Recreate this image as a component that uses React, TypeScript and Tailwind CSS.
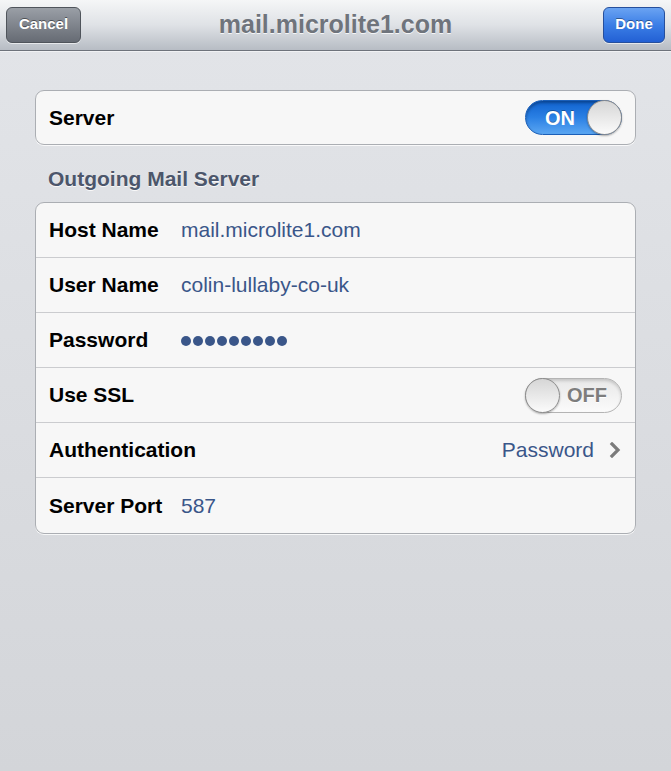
import React from 'react';

const font = { fontFamily: '"Liberation Sans", Arial, sans-serif' };

const Toggle = ({ on }: { on: boolean }) => {
    if (on) {
        return (
            <div className="relative w-[97px] h-[35px] rounded-full border border-[#1b5fb8] bg-gradient-to-b from-[#0f62cf] via-[#2a80e4] to-[#5aa6f2] flex items-center shadow-[inset_0_2px_3px_rgba(0,0,0,0.3)]">
                <span className="pl-[19px] text-white font-bold text-[20px] [text-shadow:0_-1px_0_rgba(0,0,0,0.3)]">ON</span>
                <div className="absolute right-[-1px] top-[-1px] w-[35px] h-[35px] rounded-full border border-[#8c8c8c] bg-gradient-to-b from-[#d6d6d6] to-[#fbfbfb] shadow-[0_1px_2px_rgba(0,0,0,0.3)]" />
            </div>
        );
    }
    return (
        <div className="relative w-[97px] h-[35px] rounded-full border border-[#b4b4b4] bg-gradient-to-b from-[#e8e8e8] to-[#fbfbfb] flex items-center justify-end shadow-[inset_0_2px_3px_rgba(0,0,0,0.15)]">
            <span className="pr-[14px] text-[#7d7d7d] font-bold text-[20px] [text-shadow:0_1px_0_#fff]">OFF</span>
            <div className="absolute left-[-1px] top-[-1px] w-[35px] h-[35px] rounded-full border border-[#8c8c8c] bg-gradient-to-b from-[#d6d6d6] to-[#fbfbfb] shadow-[0_1px_2px_rgba(0,0,0,0.3)]" />
        </div>
    );
};

const Row = ({ children, last }: { children: React.ReactNode; last?: boolean }) => (
    <div className={`h-[55px] flex items-center pl-[13px] pr-[13px] ${last ? '' : 'border-b border-[#cbcccf]'}`}>
        {children}
    </div>
);

const Label = ({ text, w }: { text: string; w?: string }) => (
    <span className={`text-[21px] font-bold text-black ${w ?? ''}`}>{text}</span>
);

const Value = ({ text }: { text: string }) => (
    <span className="text-[21px] text-[#3a5689]">{text}</span>
);

export default function App() {
    return (
        <div style={font} className="w-[671px] h-[771px] flex flex-col bg-gradient-to-b from-[#e3e5e9] to-[#d3d5d9] overflow-hidden">
            {/* nav bar */}
            <div className="h-[51px] shrink-0 grid grid-cols-[1fr_auto_1fr] items-center px-[6px] pb-[5px] pt-[4px] bg-gradient-to-b from-[#f5f6f7] via-[#dfe2e6] to-[#b7bcc4] border-b border-[#6e737b] shadow-[0_1px_0_rgba(255,255,255,0.5)]">
                <div className="flex">
                    <button className="w-[75px] h-[36px] rounded-[6px] border border-[#4f545b] bg-gradient-to-b from-[#9a9fa6] to-[#666b74] text-white font-bold text-[15px] [text-shadow:0_-1px_0_rgba(0,0,0,0.45)] shadow-[0_1px_0_rgba(255,255,255,0.6)]">
                        Cancel
                    </button>
                </div>
                <div className="text-[25px] font-bold text-[#6f747c] [text-shadow:0_1px_0_rgba(255,255,255,0.8)]">
                    mail.microlite1.com
                </div>
                <div className="flex justify-end">
                    <button className="w-[62px] h-[36px] rounded-[6px] border border-[#264f9c] bg-gradient-to-b from-[#6aa3f2] via-[#3b7ee6] to-[#2360d4] text-white font-bold text-[15px] [text-shadow:0_-1px_0_rgba(0,0,0,0.4)] shadow-[0_1px_0_rgba(255,255,255,0.6)]">
                        Done
                    </button>
                </div>
            </div>

            <div className="px-[35px] pt-[39px]">
                <div className="rounded-[9px] border border-[#abaeb3] bg-[#f7f7f7] shadow-[0_1px_0_rgba(255,255,255,0.8)]">
                    <div className="h-[53px] flex items-center justify-between pl-[13px] pr-[13px]">
                        <Label text="Server" />
                        <Toggle on />
                    </div>
                </div>

                <div className="pl-[13px] pt-[18px] pb-[7px] text-[21px] leading-[32px] font-bold text-[#4c566b] [text-shadow:0_1px_0_rgba(255,255,255,0.8)]">
                    Outgoing Mail Server
                </div>

                <div className="rounded-[9px] border border-[#abaeb3] bg-[#f7f7f7] shadow-[0_1px_0_rgba(255,255,255,0.8)] overflow-hidden">
                    <Row>
                        <Label text="Host Name" w="w-[132px]" />
                        <Value text="mail.microlite1.com" />
                    </Row>
                    <Row>
                        <Label text="User Name" w="w-[132px]" />
                        <Value text="colin-lullaby-co-uk" />
                    </Row>
                    <Row>
                        <Label text="Password" w="w-[132px]" />
                        <div className="flex gap-[2px] pt-[2px]">
                            {Array.from({ length: 9 }).map((_, i) => (
                                <div key={i} className="w-[10px] h-[10px] rounded-full bg-[#3a5689]" />
                            ))}
                        </div>
                    </Row>
                    <Row>
                        <div className="flex-1">
                            <Label text="Use SSL" />
                        </div>
                        <Toggle on={false} />
                    </Row>
                    <Row>
                        <div className="flex-1">
                            <Label text="Authentication" />
                        </div>
                        <Value text="Password" />
                        <svg width="12" height="16" viewBox="0 0 12 16" className="ml-[15px] mr-[1px]">
                            <polyline points="3,2 9,8 3,14" fill="none" stroke="#7b7b7b" strokeWidth="3.2" strokeLinecap="square" />
                        </svg>
                    </Row>
                    <Row last>
                        <Label text="Server Port" w="w-[132px]" />
                        <Value text="587" />
                    </Row>
                </div>
            </div>
        </div>
    );
}
